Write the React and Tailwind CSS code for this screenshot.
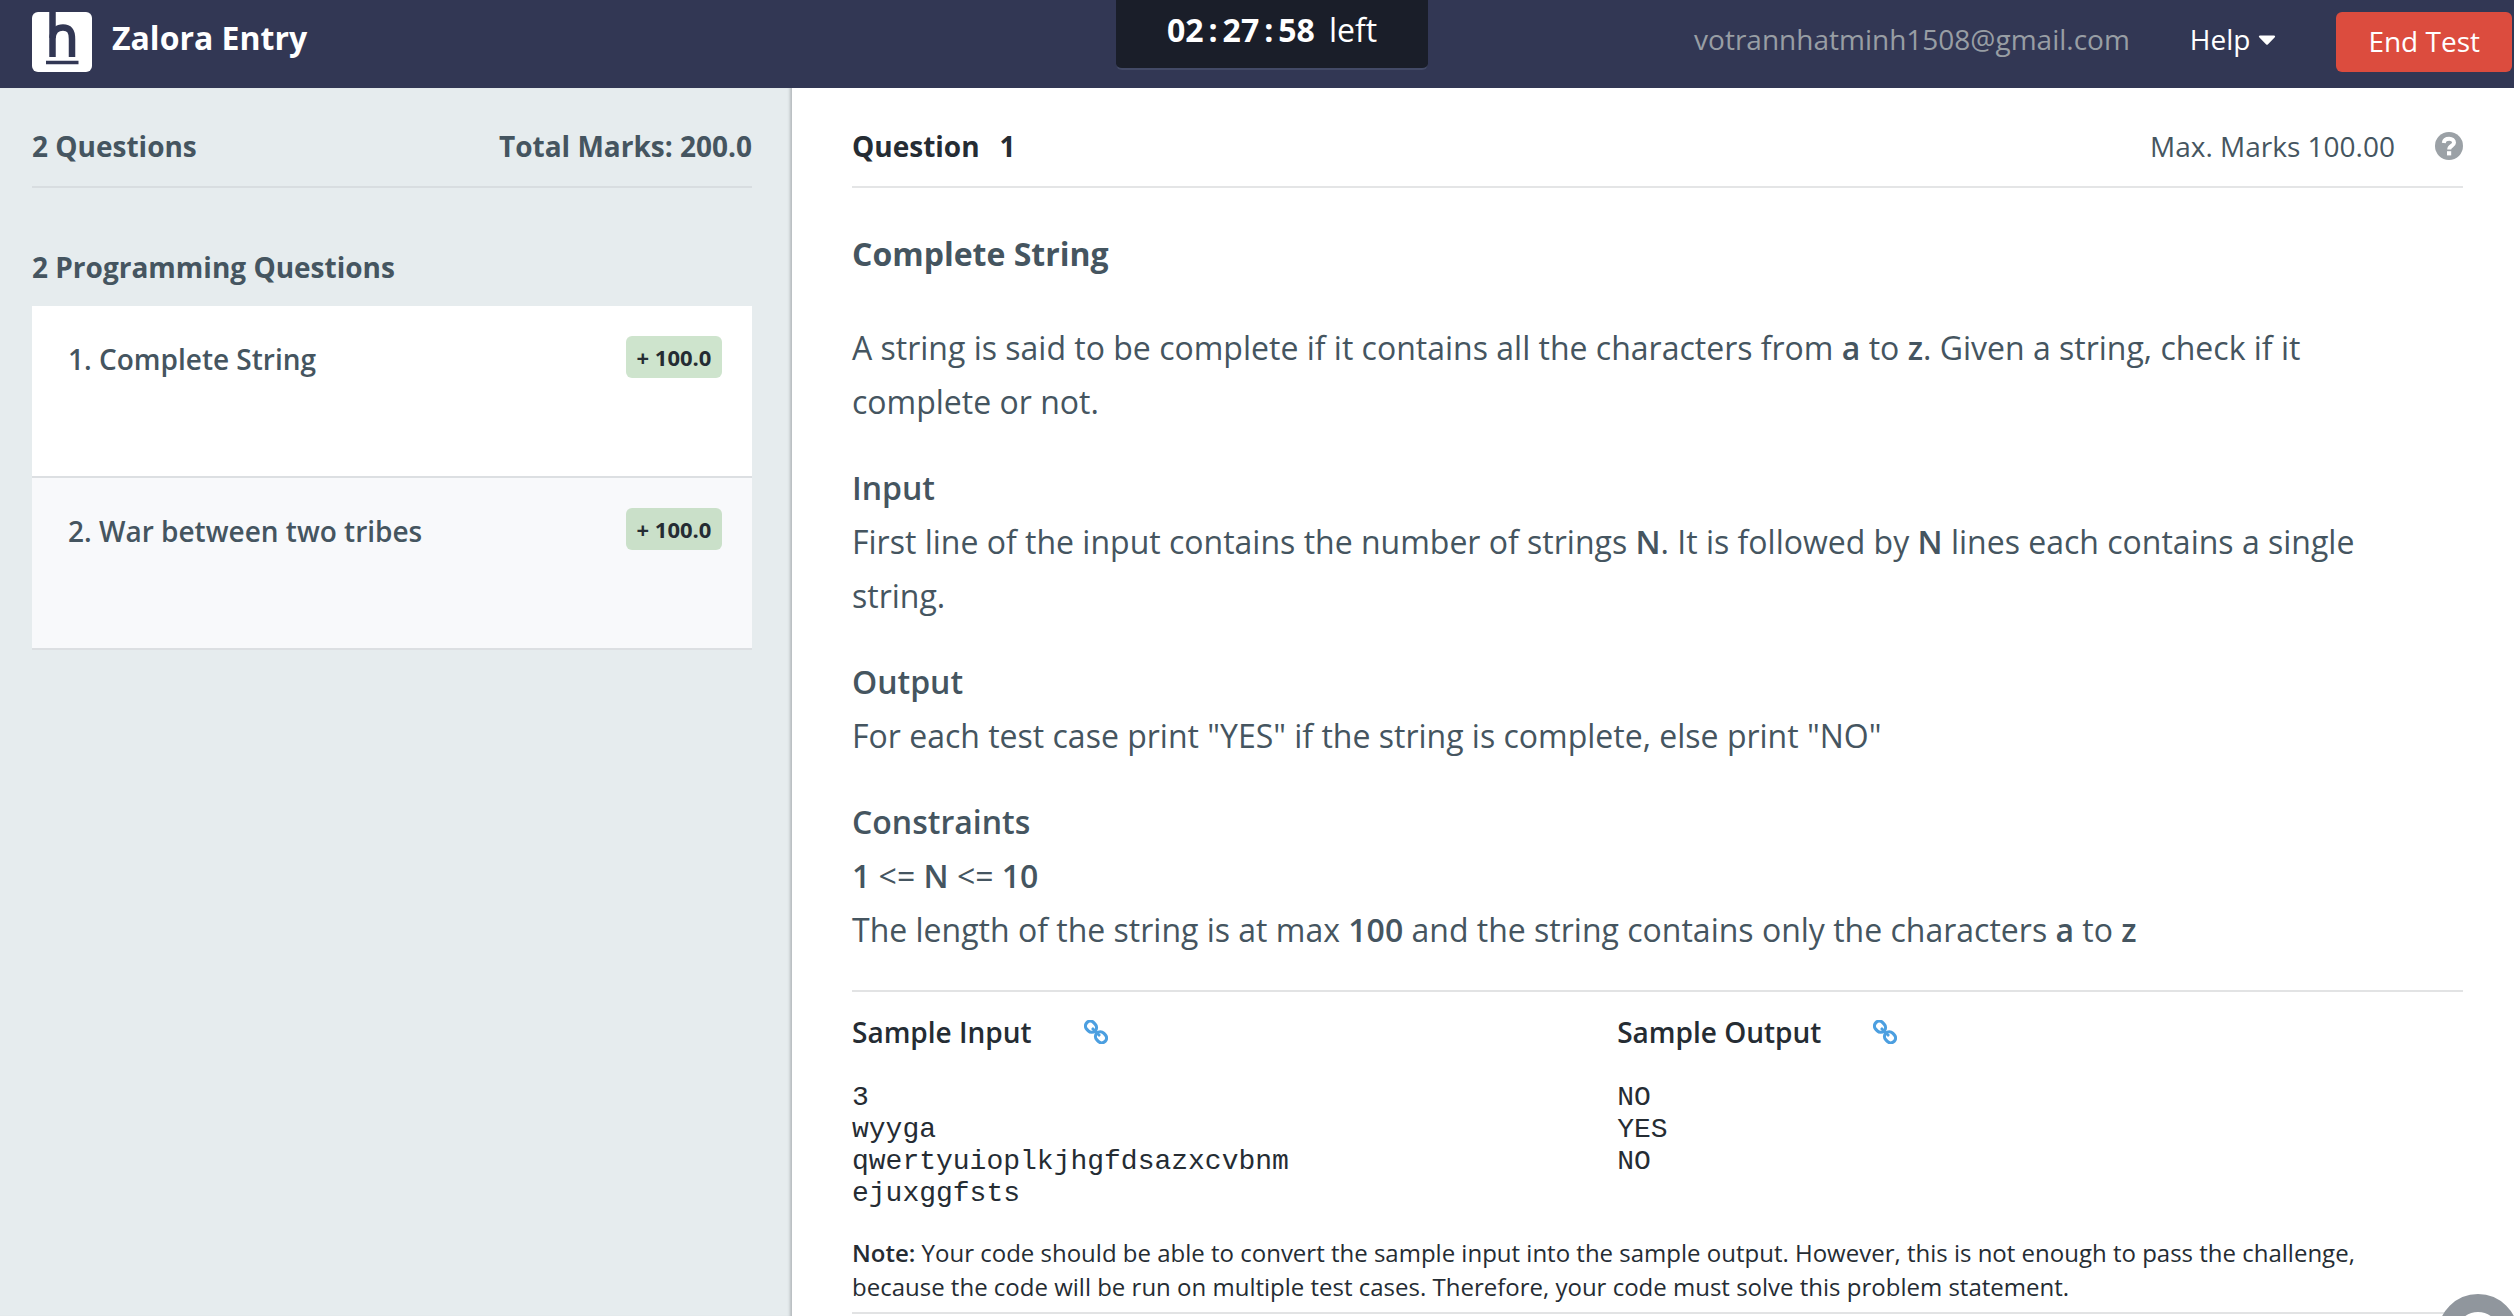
import React from "react";
import { FaCaretDown } from "react-icons/fa";

const questions = [
  { title: "1. Complete String", marks: "+ 100.0", active: true },
  { title: "2. War between two tribes", marks: "+ 100.0", active: false },
];

function Logo() {
  return (
    <svg viewBox="0 0 60 60" className="size-[60px] shrink-0" aria-label="HackerEarth" role="img">
      <rect width="60" height="60" rx="6" fill="#fff" />
      <g fill="none" stroke="#323754">
        <path d="M20.5 0V45" strokeWidth="6.5" />
        <path d="M20.5 26C21 18.500 26 15.500 31 15.500C37.500 15.500 40 19.500 40 27V45" strokeWidth="6.500" />
        <path d="M14 50.500H46.500" strokeWidth="3.500" />
      </g>
    </svg>
  );
}

function HelpIcon() {
  return (
    <svg viewBox="0 0 28 28" className="size-7" aria-hidden="true">
      <circle cx="14" cy="14" r="14" fill="#9ba1a6" />
      <path d="M8.800 11C9.200 7.600 11.500 6.800 14.200 6.800C17 6.800 19 8.400 19 10.800C19 14 14.200 13.600 14.200 17.500" fill="none" stroke="#fff" strokeWidth="4" />
      <rect x="12" y="19.200" width="4.200" height="4.200" fill="#fff" />
    </svg>
  );
}

function LinkIcon() {
  return (
    <svg viewBox="0 0 24 24" className="size-6" fill="none" stroke="currentColor" strokeWidth="3.200" aria-hidden="true">
      <rect x="1.200" y="1.900" width="11.600" height="9.600" rx="4.800" transform="rotate(45 7 6.700)" />
      <rect x="11.200" y="12.500" width="11.600" height="9.600" rx="4.800" transform="rotate(45 17 17.300)" />
      <path d="M8 8L16 16" strokeWidth="2.600" />
    </svg>
  );
}

function Header() {
  return (
    <header className="grid h-[88px] grid-cols-[1fr_auto_1fr] items-start bg-[#323754] pl-8 pr-[2px] text-white">
      <div className="flex items-start gap-5 pt-3">
        <Logo />
        <h1 className="text-[32px] leading-[52px] font-bold">Zalora Entry</h1>
      </div>
      <div className="flex h-[70px] w-[312px] justify-center gap-[14px] rounded-b-[6px] border-b-2 border-[#434a66] bg-[#1a1e29] pt-1 text-[32px] leading-[52px]">
        <span className="flex gap-[5px] font-bold">
          <span>02</span>
          <span>:</span>
          <span>27</span>
          <span>:</span>
          <span>58</span>
        </span>
        <span>left</span>
      </div>
      <div className="flex items-start justify-end pt-3">
        <span className="mr-15 text-[28px] leading-[54px] text-[#989ea4]">votrannhatminh1508@gmail.com</span>
        <button type="button" className="mr-15 flex items-center gap-2 text-[28px] leading-[54px]">
          Help
          <FaCaretDown className="-mx-[5px] size-7" />
        </button>
        <button type="button" className="h-[60px] rounded-[6px] bg-[#dc4c3e] px-8 pb-[2px] text-[28px]">
          End Test
        </button>
      </div>
    </header>
  );
}

function Sidebar() {
  return (
    <aside className="w-[792px] shrink-0 bg-[#e6ecee] pr-10 pl-8 text-[28px] text-[#455560] shadow-[inset_-4px_0_3px_-2px_#b4b9bc]">
      <div className="flex justify-between border-b-2 border-[#d8dde0] pt-[38px] pb-5 leading-10 font-bold">
        <span>2 Questions</span>
        <span>Total Marks: 200.0</span>
      </div>
      <h2 className="pt-[59px] pb-[19px] leading-10 font-bold">2 Programming Questions</h2>
      <ul>
        {questions.map((q) => (
          <li
            key={q.title}
            className={`flex h-[172px] items-start justify-between border-b-2 border-[#dcdfe2] pr-[30px] pl-9 ${q.active ? "bg-white" : "bg-[#f8f9fb]"}`}
          >
            <a href="#question" className="pt-[33px] leading-10 font-semibold">
              {q.title}
            </a>
            <span
              className={`mt-[30px] flex h-[42px] w-24 items-center justify-center rounded-[6px] text-[22px] font-bold text-[#252c33] ${q.active ? "bg-[#cee4cd]" : "bg-[#cae0c9]"}`}
            >
              {q.marks}
            </span>
          </li>
        ))}
      </ul>
    </aside>
  );
}

function Sample({ title, lines }) {
  return (
    <section>
      <h3 className="flex items-center gap-[52px] text-[28px] leading-10 font-semibold">
        {title}
        <a href="#sample" aria-label={`Open ${title}`} className="text-[#4c9fe0]">
          <LinkIcon />
        </a>
      </h3>
      <pre className="mt-[30px] font-['Liberation_Mono',monospace] text-[28px] leading-8">{lines.join("\n")}</pre>
    </section>
  );
}

export default function App() {
  return (
    <div className="relative flex h-screen flex-col overflow-hidden bg-white font-['Open_Sans',sans-serif]">
      <Header />
      <div className="flex min-h-0 flex-1">
        <Sidebar />
        <main id="question" className="min-w-0 flex-1 pr-[51px] pl-15 text-[#455560]">
          <div className="flex items-center border-b-2 border-[#e4e5e6] pt-[38px] pb-5 text-[28px] leading-10">
            <h2 className="flex flex-1 gap-5 font-bold text-[#252c33]">
              <span>Question</span>
              <span>1</span>
            </h2>
            <span className="mr-10">Max. Marks 100.00</span>
            <button type="button" aria-label="Help">
              <HelpIcon />
            </button>
          </div>
          <article className="flex flex-col gap-8 border-b-2 border-[#e2e3e4] pt-[39px] pb-[33px] text-[32px] leading-[54px] [&_b]:font-semibold">
            <h2 className="mb-2 font-bold">Complete String</h2>
            <p>
              A string is said to be complete if it contains all the characters from <b>a</b> to <b>z</b>. Given a string, check if it
              <br />
              complete or not.
            </p>
            <p>
              <b>Input</b>
              <br />
              First line of the input contains the number of strings <b>N</b>. It is followed by <b>N</b> lines each contains a single
              <br />
              string.
            </p>
            <p>
              <b>Output</b>
              <br />
              For each test case print "YES" if the string is complete, else print "NO"
            </p>
            <p>
              <b>Constraints</b>
              <br />
              <b>1</b> &lt;= <b>N</b> &lt;= <b>10</b>
              <br />
              The length of the string is at max <b>100</b> and the string contains only the characters <b>a</b> to <b>z</b>
            </p>
          </article>
          <div id="sample" className="border-b-2 border-[#e2e3e4] pt-5 pb-2 text-[#252c33]">
            <div className="grid grid-cols-[19fr_21fr]">
              <Sample title="Sample Input" lines={["3", "wyyga", "qwertyuioplkjhgfdsazxcvbnm", "ejuxggfsts"]} />
              <Sample title="Sample Output" lines={["NO", "YES", "NO"]} />
            </div>
            <p className="mt-[26px] text-[24px] leading-[34px]">
              <b className="font-semibold">Note:</b> Your code should be able to convert the sample input into the sample output. However, this is not
              enough to pass the challenge,
              <br />
              because the code will be run on multiple test cases. Therefore, your code must solve this problem statement.
            </p>
          </div>
        </main>
      </div>
      <button
        type="button"
        aria-label="Support chat"
        className="absolute -right-1 -bottom-[58px] size-[80px] rounded-full border-[18px] border-[#90969d] bg-white"
      />
    </div>
  );
}
